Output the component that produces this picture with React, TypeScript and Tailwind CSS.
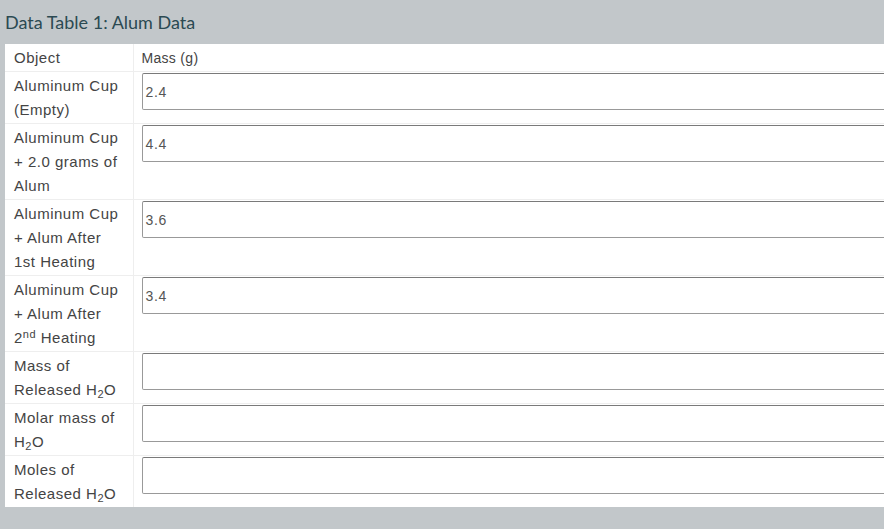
import React from 'react'

const H2O = (
  <>
    H<sub className="text-[11px]">2</sub>O
  </>
)

const rows: Array<{ label: React.ReactNode; value: string }> = [
  { label: <>Aluminum Cup<br />(Empty)</>, value: '2.4' },
  { label: <>Aluminum Cup<br />+ 2.0 grams of<br />Alum</>, value: '4.4' },
  { label: <>Aluminum Cup<br />+ Alum After<br />1st Heating</>, value: '3.6' },
  {
    label: (
      <>
        Aluminum Cup<br />+ Alum After<br />2<sup className="text-[11px]">nd</sup> Heating
      </>
    ),
    value: '3.4',
  },
  { label: <>Mass of<br />Released {H2O}</>, value: '' },
  { label: <>Molar mass of<br />{H2O}</>, value: '' },
  { label: <>Moles of<br />Released {H2O}</>, value: '' },
]

export default function App() {
  return (
    <div className="w-[884px] h-[529px] overflow-hidden bg-[#c2c7ca]">
      <div className="h-[44px] flex items-center pl-[5px]">
        <h2 className="text-[18px] text-[#2b4a52]" style={{ fontFamily: 'Lato, sans-serif' }}>
          Data Table 1: Alum Data
        </h2>
      </div>
      <div className="ml-[5px] w-[920px] bg-white">
        <table
          className="w-full table-fixed border-collapse text-[15px] leading-[24px] tracking-[0.5px] text-[#444]"
          style={{ fontFamily: '"Liberation Sans", Arial, sans-serif' }}
        >
          <colgroup>
            <col className="w-[128px]" />
            <col />
          </colgroup>
          <tbody>
            <tr className="border-b border-[#eee]">
              <td className="border-r border-[#eee] pl-[9px] pt-[2px] pb-px align-top whitespace-nowrap">
                Object
              </td>
              <td className="pl-[8px] pt-[2px] pb-px align-top text-[14px] tracking-[0.3px]">Mass (g)</td>
            </tr>
            {rows.map((r, i) => (
              <tr key={i} className="border-b border-[#eee] last:border-b-0">
                <td className="border-r border-[#eee] pl-[9px] pt-[2px] pb-px align-top whitespace-nowrap">
                  {r.label}
                </td>
                <td className="pl-[8px] pt-px align-top">
                  <div className="h-[37px] w-full flex items-center pl-[3px] border border-[#999] border-t-[#7a7a7a] rounded-[2px] text-[14px] text-[#555] tracking-[0.6px]">
                    {r.value}
                  </div>
                </td>
              </tr>
            ))}
          </tbody>
        </table>
      </div>
    </div>
  )
}
